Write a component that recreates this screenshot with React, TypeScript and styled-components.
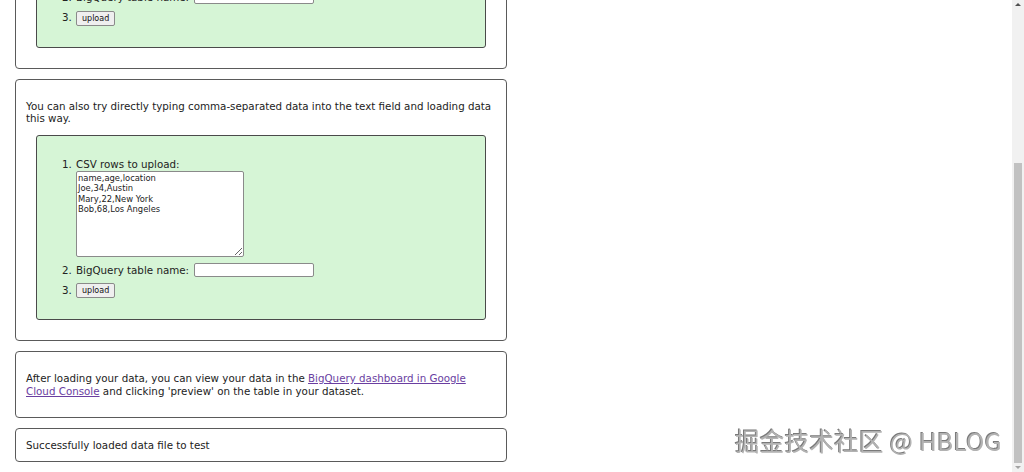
import React, { useLayoutEffect, useRef } from "react";
import styled, { createGlobalStyle } from "styled-components";

const GlobalStyle = createGlobalStyle`
  html, body {
    margin: 0;
    padding: 0;
    background: #ffffff;
    overflow: hidden;
  }
  body {
    font-family: "DejaVu Sans", Verdana, sans-serif;
    font-size: 10.3px;
    color: #222;
  }
`;

const Viewport = styled.div`
  height: 100vh;
  overflow: hidden;
  padding-right: 12px;
  box-sizing: border-box;
`;

const Page = styled.main`
  display: flex;
  flex-direction: column;
  gap: 10px;
  width: 492px;
  padding: 0 0 10px 15px;
`;

const Card = styled.section<{ $tight?: boolean }>`
  border: 1px solid #5a5a5a;
  border-radius: 4px;
  padding: ${(p) => (p.$tight ? "9.5px 10px" : "10px")};
  line-height: 12.5px;
`;

const Para = styled.p`
  margin: 10px 0;
  line-height: 12.5px;
`;

const Title = styled.h2`
  margin: 12px 0 6px;
  font-size: 16px;
  font-weight: bold;
`;

const FormBox = styled.div`
  margin: 0 10px 10px;
  background: #d6f5d6;
  border: 1px solid #4a4a4a;
  border-radius: 3px;
  padding: 21px 0 21px;
`;

const Steps = styled.ol`
  margin: 0;
  padding-left: 38px;
  display: flex;
  flex-direction: column;
  gap: 6px;
  font-size: 10.3px;
  line-height: 14px;
`;

const Step = styled.li`
  padding-left: 1px;
`;

const Label = styled.label`
  display: block;
`;

const InlineLabel = styled.label`
  display: inline-flex;
  align-items: center;
  gap: 5px;
`;

const CsvArea = styled.textarea`
  display: block;
  box-sizing: border-box;
  width: 168px;
  height: 86px;
  margin: 0;
  padding: 1px 1px;
  border: 1px solid #8a8a8a;
  border-radius: 2px;
  background: #fff;
  font-family: "DejaVu Sans", Verdana, sans-serif;
  font-size: 8.4px;
  line-height: 10.5px;
  color: #222;
  resize: both;
`;

const TextInput = styled.input`
  box-sizing: border-box;
  width: 120px;
  height: 14px;
  padding: 0 2px;
  border: 1px solid #8a8a8a;
  border-radius: 2px;
  background: #fff;
  font-size: 9px;
`;

const FileInput = styled.input`
  font-size: 9px;
  font-family: "DejaVu Sans", Verdana, sans-serif;
`;

const UploadButton = styled.button`
  box-sizing: border-box;
  height: 15px;
  padding: 0 5px;
  border: 1px solid #8a8a8a;
  border-radius: 2px;
  background: #efefef;
  font-family: "DejaVu Sans", Verdana, sans-serif;
  font-size: 8px;
  line-height: 13px;
  color: #111;
  vertical-align: middle;
`;

const ConsoleLink = styled.a`
  color: #6a3ea1;
  text-decoration: underline;
`;

const Message = styled.div`
  line-height: 12.5px;
`;

/* Overlay scrollbar drawn on the right edge of the window */
const ScrollTrack = styled.div`
  position: fixed;
  top: 0;
  right: 0;
  width: 12px;
  height: 100vh;
  background: #f1f1f1;
  display: flex;
  flex-direction: column;
  align-items: center;
`;

const ScrollArrow = styled.div<{ $down?: boolean }>`
  width: 0;
  height: 0;
  margin: ${(p) => (p.$down ? "auto 0 3px" : "3px 0 0")};
  border-left: 3px solid transparent;
  border-right: 3px solid transparent;
  ${(p) =>
    p.$down
      ? "border-top: 3px solid #a3a3a3;"
      : "border-bottom: 3px solid #505050;"}
`;

const ScrollThumb = styled.div`
  position: absolute;
  left: 2px;
  width: 8px;
  background: #c1c1c1;
`;

const Watermark = styled.div`
  position: fixed;
  right: 22px;
  bottom: 14px;
  font-family: "Noto Sans CJK SC", "Noto Sans", sans-serif;
  font-size: 24.5px;
  letter-spacing: 0.3px;
  color: #b2b2b2;
  text-shadow: -1px -1px 0 #7a7a7a, 1px 1px 1px #ffffff;
  white-space: nowrap;
`;

export default function App() {
  const viewRef = useRef<HTMLDivElement>(null);

  useLayoutEffect(() => {
    const el = viewRef.current;
    if (el) el.scrollTop = el.scrollHeight;
  }, []);

  return (
    <>
      <GlobalStyle />
      <Viewport ref={viewRef}>
        <Page>
          <Title>Load a CSV into BigQuery</Title>
          <Card>
            <Para>
              Pick a CSV file from your computer and enter the name of the
              BigQuery table it should be loaded into.
            </Para>
            <FormBox>
              <Steps>
                <Step>
                  <InlineLabel>
                    CSV file: <FileInput type="file" />
                  </InlineLabel>
                </Step>
                <Step>
                  <InlineLabel>
                    BigQuery table name: <TextInput type="text" />
                  </InlineLabel>
                </Step>
                <Step>
                  <UploadButton type="button">upload</UploadButton>
                </Step>
              </Steps>
            </FormBox>
          </Card>

          <Card>
            <Para>
              You can also try directly typing comma-separated data into the
              text field and loading data this way.
            </Para>
            <FormBox>
              <Steps>
                <Step>
                  <Label>
                    CSV rows to upload:
                    <CsvArea
                      defaultValue={
                        "name,age,location\nJoe,34,Austin\nMary,22,New York\nBob,68,Los Angeles"
                      }
                    />
                  </Label>
                </Step>
                <Step>
                  <InlineLabel>
                    BigQuery table name: <TextInput type="text" />
                  </InlineLabel>
                </Step>
                <Step>
                  <UploadButton type="button">upload</UploadButton>
                </Step>
              </Steps>
            </FormBox>
          </Card>

          <Card>
            <Para>
              After loading your data, you can view your data in the{" "}
              <ConsoleLink href="#">
                BigQuery dashboard in Google Cloud Console
              </ConsoleLink>{" "}
              and clicking 'preview' on the table in your dataset.
            </Para>
          </Card>

          <Card $tight>
            <Message>Successfully loaded data file to test</Message>
          </Card>
        </Page>
      </Viewport>

      <ScrollTrack>
        <ScrollArrow />
        <ScrollThumb style={{ top: 163, height: 300 }} />
        <ScrollArrow $down />
      </ScrollTrack>

      <Watermark>掘金技术社区 @ HBLOG</Watermark>
    </>
  );
}
